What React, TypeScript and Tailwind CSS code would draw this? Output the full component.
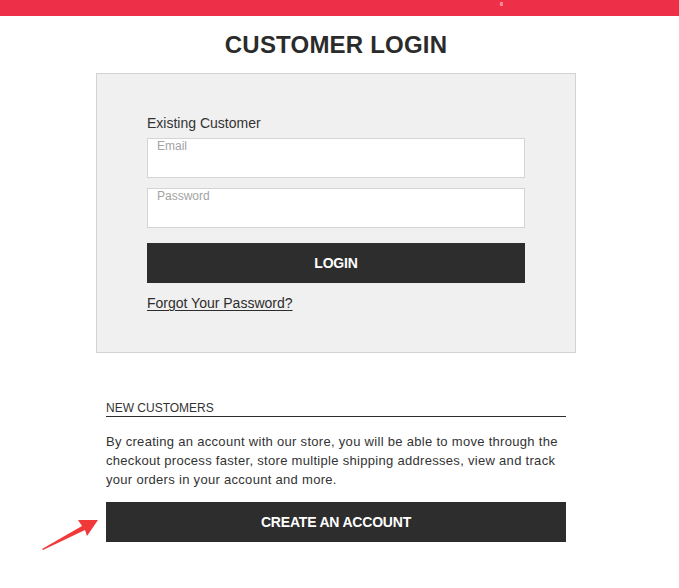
import React from 'react';

const font = { fontFamily: '"Liberation Sans", Arial, sans-serif' };

const Field: React.FC<{ label: string }> = ({ label }) => (
  <div className="h-10 border border-[#d4d4d4] bg-white px-[9px] text-xs leading-[14px] text-[#a3a3a3]">
    {label}
  </div>
);

const App: React.FC = () => {
  return (
    <div className="relative min-h-[588px] w-full bg-white text-[#2d2d2d]" style={font}>
      {/* top promo strip */}
      <div className="h-4 w-full overflow-hidden bg-[#ed2f47]">
        <div className="ml-[500px] h-4 pt-[1px] text-[5px] leading-none text-white">ɡ</div>
      </div>

      <div className="w-[672px]">
        <h1 className="mt-[15px] text-center text-2xl font-bold leading-7 tracking-[0.2px] text-[#2b2b2b]">
          CUSTOMER LOGIN
        </h1>

        {/* existing customer box */}
        <div className="mx-auto mt-[14px] w-[480px] border border-[#d3d3d3] bg-[#f0f0f0] px-[50px] pb-[39px] pt-[39px]">
          <p className="text-sm leading-5 text-[#333]">Existing Customer</p>
          <div className="mt-[5px] flex flex-col gap-[10px]">
            <Field label="Email" />
            <Field label="Password" />
          </div>
          <button className="mt-[15px] flex h-10 w-full items-center justify-center bg-[#2d2d2d] text-sm font-bold tracking-[-0.2px] text-white">
            LOGIN
          </button>
          <a className="mt-[10px] block text-sm leading-5 text-[#2d2d2d] underline underline-offset-2">
            Forgot Your Password?
          </a>
        </div>

        {/* new customers */}
        <div className="mx-auto mt-[48px] w-[460px]">
          <h2 className="border-b border-[#2d2d2d] text-xs leading-[15px] text-[#333]">NEW CUSTOMERS</h2>
          <p className="mt-[15px] text-[13px] leading-[19px] tracking-[0.3px] text-[#333]">
            By creating an account with our store, you will be able to move through the checkout process faster, store
            multiple shipping addresses, view and track your orders in your account and more.
          </p>
          <button className="mt-[13px] flex h-10 w-full items-center justify-center bg-[#2d2d2d] text-sm font-bold tracking-[-0.2px] text-white">
            CREATE AN ACCOUNT
          </button>
        </div>
      </div>

      {/* annotation arrow */}
      <svg className="absolute left-[38px] top-[514px]" width="64" height="38" viewBox="0 0 64 38">
        <polygon points="4,35 44,12 40,6 60,6 49,22 47,16 5,36" fill="#f2393a" />
      </svg>
    </div>
  );
};

export default App;
